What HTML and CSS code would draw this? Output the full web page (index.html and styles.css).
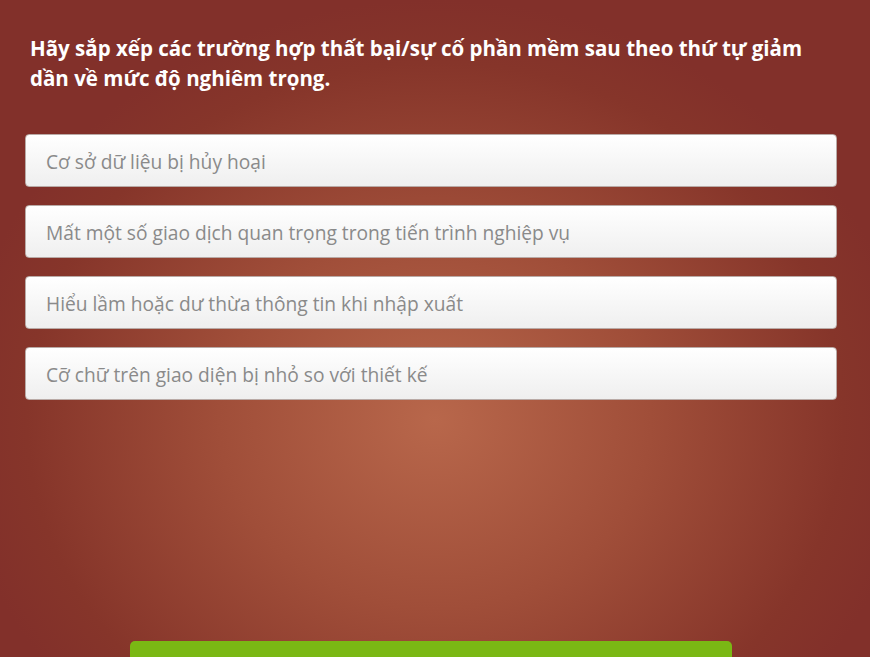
FILE: index.html
```html
<!DOCTYPE html>
<html lang="vi">
<head>
<meta charset="utf-8">
<link rel="stylesheet" href="styles.css">
</head>
<body>
<div class="page">
  <h1 class="question">Hãy sắp xếp các trường hợp thất bại/sự cố phần mềm sau theo thứ tự giảm dần về mức độ nghiêm trọng.</h1>
  <ul class="options">
    <li class="option">Cơ sở dữ liệu bị hủy hoại</li>
    <li class="option">Mất một số giao dịch quan trọng trong tiến trình nghiệp vụ</li>
    <li class="option">Hiểu lầm hoặc dư thừa thông tin khi nhập xuất</li>
    <li class="option">Cỡ chữ trên giao diện bị nhỏ so với thiết kế</li>
  </ul>
  <div class="actions">
    <button class="submit"></button>
  </div>
</div>
</body>
</html>
```
FILE: styles.css
```css
html, body {
  margin: 0;
  height: 100%;
}
body {
  background: radial-gradient(ellipse 480px 420px at 435px 420px, #b8674b 0%, #a04e39 45%, #86352a 85%, #82302a 100%);
  background-color: #82302a;
  font-family: "Open Sans", "Noto Sans", sans-serif;
  overflow: hidden;
}
.page {
  padding: 33px 33px 0 25px;
}
.question {
  margin: 0 0 0 5px;
  max-width: 795px;
  color: #ffffff;
  font-size: 20.5px;
  line-height: 30px;
  font-weight: 700;
}
.options {
  list-style: none;
  margin: 41px 0 0;
  padding: 0;
  display: flex;
  flex-direction: column;
  gap: 18px;
}
.option {
  height: 49px;
  box-sizing: content-box;
  border: 1px solid #b9aaa6;
  border-radius: 4px;
  background: linear-gradient(#ffffff, #efefef);
  color: #8a8a8a;
  font-size: 19.2px;
  line-height: 49px;
  padding: 2px 20px 0;
}
.actions {
  display: flex;
  justify-content: center;
  margin-top: 241px;
}
.submit {
  width: 602px;
  height: 40px;
  border: none;
  border-radius: 5px;
  background: #7ab814;
}
```
